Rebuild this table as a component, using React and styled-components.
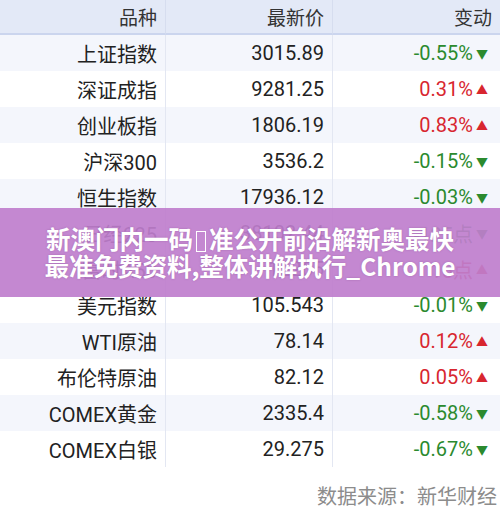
import React from 'react';
import styled, { createGlobalStyle } from 'styled-components';

const GlobalStyle = createGlobalStyle`
  html, body {
    margin: 0;
    padding: 0;
    background: #ffffff;
  }
  body {
    font-family: Roboto, "Noto Sans CJK SC", sans-serif;
  }
`;

const Page = styled.div`
  width: 500px;
  height: 507px;
  position: relative;
  overflow: hidden;
  background: #fff;
`;

const Table = styled.div`
  display: grid;
  grid-template-columns: 166px 167px 167px;
`;

const HeadCell = styled.div`
  height: 33px;
  background: #e3e9f7;
  border-bottom: 2px solid #cbd5ee;
  border-right: ${({ $last }) => ($last ? 'none' : '1px solid #d6ddef')};
  display: flex;
  align-items: center;
  justify-content: flex-end;
  padding-right: 8px;
  font-size: 19px;
  color: #333;
`;

const Cell = styled.div`
  height: 36px;
  background: ${({ $odd }) => ($odd ? '#f4f6fc' : '#ffffff')};
  border-right: ${({ $last }) => ($last ? 'none' : '1px solid #e3e7f2')};
  display: flex;
  align-items: center;
  justify-content: flex-end;
  padding-right: ${({ $last }) => ($last ? '12px' : '8px')};
  font-size: 20px;
  color: ${({ $tone }) =>
    $tone === 'up' ? '#d8262f' : $tone === 'down' ? '#2b8a2e' : '#222'};
`;

const Arrow = styled.span`
  font-size: 12px;
  margin-left: 3px;
`;

const Footer = styled.div`
  display: flex;
  justify-content: flex-end;
  padding: 17px 3px 0 0;
  font-size: 20px;
  line-height: 24px;
  color: #8c8c8c;
  font-family: "Noto Sans CJK SC", sans-serif;
`;

const Banner = styled.div`
  position: absolute;
  left: 0;
  right: 0;
  top: 208px;
  height: 89px;
  background: rgba(191, 126, 205, 0.92);
  display: flex;
  flex-direction: column;
  align-items: center;
  justify-content: center;
  color: #fff;
  font-family: "Noto Sans CJK SC", sans-serif;
  font-weight: 700;
  font-size: 24.5px;
  line-height: 27px;
  white-space: nowrap;
  text-align: center;
  text-shadow: 0 0 2px rgba(120, 60, 130, 0.4);
  padding-bottom: 2px;
  box-sizing: border-box;
`;

const Tofu = styled.span`
  display: inline-block;
  width: 10px;
  height: 21px;
  border: 1.5px solid #fff;
  vertical-align: -3px;
  margin: 0 3px;
  box-sizing: border-box;
`;

const rows = [
  ['上证指数', '3015.89', '-0.55%', 'down'],
  ['深证成指', '9281.25', '0.31%', 'up'],
  ['创业板指', '1806.19', '0.83%', 'up'],
  ['沪深300', '3536.2', '-0.15%', 'down'],
  ['恒生指数', '17936.12', '-0.03%', 'down'],
  ['日经225', '38102.44', '-125点', 'down'],
  ['富时A50', '12265', '15点', 'up'],
  ['美元指数', '105.543', '-0.01%', 'down'],
  ['WTI原油', '78.14', '0.12%', 'up'],
  ['布伦特原油', '82.12', '0.05%', 'up'],
  ['COMEX黄金', '2335.4', '-0.58%', 'down'],
  ['COMEX白银', '29.275', '-0.67%', 'down'],
];

export default function App() {
  return (
    <Page>
      <GlobalStyle />
      <Table>
        <HeadCell>品种</HeadCell>
        <HeadCell>最新价</HeadCell>
        <HeadCell $last>变动</HeadCell>
        {rows.map(([name, price, change, tone], i) => {
          const odd = i % 2 === 0;
          return (
            <React.Fragment key={name}>
              <Cell $odd={odd}>{name}</Cell>
              <Cell $odd={odd}>{price}</Cell>
              <Cell $odd={odd} $last $tone={tone}>
                {change}
                <Arrow>{tone === 'up' ? '▲' : '▼'}</Arrow>
              </Cell>
            </React.Fragment>
          );
        })}
      </Table>
      <Footer>数据来源：新华财经</Footer>
      <Banner>
        <div>
          新澳门内一码<Tofu />准公开前沿解新奥最快
        </div>
        <div>最准免费资料,整体讲解执行_Chrome</div>
      </Banner>
    </Page>
  );
}
